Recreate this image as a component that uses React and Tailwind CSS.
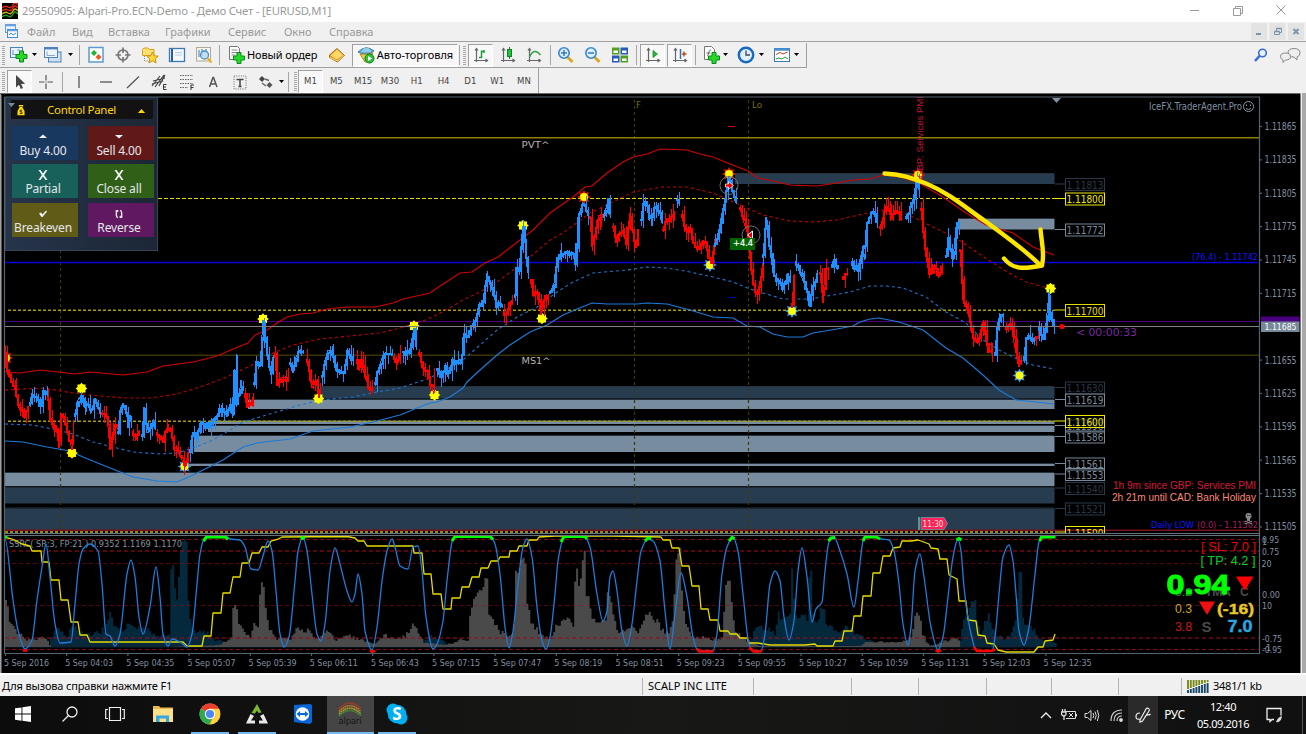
import React from "react";

/* ---------- price data: colour + way points of every trend leg ---------- */
const LEGS = [
  ["r", "5,357 8,375 13,383 17,397 20,410 25,415 29,408"],
  ["b", "30,405 32,393 36,398 41,405 43,393 47,393"],
  ["r", "48,397 50,420 53,427 57,433 59,448 61,413 64,417 67,430 70,442 72,450 74,420"],
  ["b", "75,416 77,402 81,395 84,407 87,403 91,413 95,398 100,410"],
  ["r", "102,413 107,415 110,450 113,432 117,425"],
  ["b", "118,432 120,410 123,403 127,417 128,428 130,415 132,427"],
  ["r", "133,432 136,440 140,430"],
  ["b", "142,435 144,407 147,433 149,432 153,420 156,430"],
  ["r", "157,433 162,440 166,430 172,432 174,450 178,452 182,460 185,467 188,453"],
  ["b", "190,450 193,432 197,437 200,423 207,425 212,421 217,415 222,408 227,417 230,408 233,417 234,370 236,405 237,354 238,405 241,380 243,393"],
  ["r", "245,397 247,408 251,403 253,397"],
  ["b", "254,383 256,364 260,367 263,320 266,340 268,360 271,375 273,360"],
  ["r", "275,357 277,385 282,377 288,378"],
  ["b", "290,363 293,373 296,357 299,350 304,352"],
  ["r", "307,360 310,377 312,388 316,380 319,398 321,383"],
  ["b", "322,377 325,360 328,350 332,353 335,368 340,370 344,372 347,353 353,360"],
  ["r", "357,363 358,370 361,362 365,377 369,387 373,388"],
  ["b", "375,383 378,370 383,355 393,354"],
  ["r", "394,357 397,365 400,355"],
  ["b", "403,352 409,353 414,328 417,350"],
  ["r", "419,353 423,367 428,373 431,385 434,394 435,368"],
  ["b", "437,370 440,377 445,368 448,373 452,362 457,362 462,358 463,337 468,335 472,325 474,328 479,307 483,300 487,273 490,283 493,293 497,307 502,303"],
  ["r", "504,312 507,315 509,302 513,305"],
  ["b", "515,297 516,267 519,270 522.5,228 525,243 527,260 529,278"],
  ["r", "531,283 533,293 537,295 541,315 545,298 548,300"],
  ["b", "550,293 554,283 557,257 562,257 565,252 568,255 572,252 575,262 577,243 578,217 584,203 588,213"],
  ["r", "590,217 592,247 596,230 599,215 603,220"],
  ["b", "604,217 608,200 611,218"],
  ["r", "613,227 616,243 622,230 627,245 630,213 633,233 636,248 638,230"],
  ["b", "641,220 643,203 647,205 649,220 653,213 657,205 662,220"],
  ["r", "663,230 667,220 671,218 675,213"],
  ["b", "677,200 680,205"],
  ["r", "682,217 685,230 690,227 693,243 698,248 703,240 707,250 711,263 714,245"],
  ["b", "715,246 718,235 722,213 725,200 729,177 733,193 737,203"],
  ["r", "740,208 743,220 748,235 751,270 753,280 756,295 760,283 763,263"],
  ["b", "763,257 766,217 768,238 770,250 773,273 778,280 783,290 788,273 791,283"],
  ["r", "792,307 794,277"],
  ["b", "796,262 800,273 804,283 807,293 810,307 812,290 817,277"],
  ["r", "820,273 823,303 825,268 828,270"],
  ["b", "832,265 835,260 838,270"],
  ["r", "843,277 848,272"],
  ["b", "852,265 858,268 863,247 865,260 866,230 869,217 873,213 878,223"],
  ["r", "880,227 886,208 891,215 898,213 902,220"],
  ["b", "906,217 909,212 913,200 916,182 919,187"],
  ["r", "921,210 923,230 926,257 929,273 936,267 939,277 943,263"],
  ["b", "946,257 948,240 953,260 956,227 959,223"],
  ["r", "960,250 963,300 966,307 969,317 974,343 979,337 983,323 988,353 993,350"],
  ["b", "995,353 997,327 999,318 1004,315"],
  ["r", "1006,327 1011,323 1014,343 1019,367 1022,357"],
  ["b", "1024,357 1026,337 1029,337 1034,340"],
  ["r", "1036,340 1038,338"],
  ["b", "1039,330 1043,337 1046,323 1049,293 1051,320 1054,325"],
];

const UPPER =
  "5,372 20,373 40,370 58,372 75,374 90,372 123,375 147,372 163,366 193,362 217,356 233,349 248,343 255,335 267,330 277,323 287,317 300,314 313,313 327,309 347,307 375,307 393,303 403,299 430,293 440,286 460,273 472,272 485,263 498,257 520,240 533,230 550,213 573,197 585,187 592,186 607,173 623,162 633,157 647,154 660,149 687,150 700,154 713,157 730,164 748,171 758,178 773,181 790,185 817,186 837,183 853,180 870,179 883,175 900,177 919,183 943,197 966,213 986,225 1013,233 1033,247 1054,255";
const UPPER_MID =
  "5,390 43,388 73,393 100,396 127,398 150,398 177,394 203,386 227,377 250,366 273,353 293,345 320,339 350,336 380,333 400,328 423,321 443,312 463,300 480,292 497,282 513,270 530,257 550,240 563,233 590,213 617,200 633,192 663,187 687,187 713,193 747,208 763,215 790,221 813,222 837,220 863,214 880,210 903,212 933,227 956,238 969,247 993,263 1009,273 1026,282 1048,288";
const LOWER_MID =
  "5,424 33,425 57,430 73,434 93,442 113,447 133,452 160,454 177,453 193,448 213,440 230,430 243,422 273,413 300,405 320,400 353,397 377,392 400,388 427,379 440,373 463,360 480,345 497,330 517,317 537,307 557,292 573,282 593,273 627,270 647,267 667,268 690,272 713,277 733,282 750,289 763,293 783,299 810,299 833,295 850,292 870,286 886,286 903,288 926,297 946,312 966,323 983,340 999,350 1019,360 1033,365 1054,369";
const LOWER =
  "5,441 23,442 47,447 70,451 83,457 110,468 133,477 157,481 177,482 193,475 203,470 223,460 243,447 257,443 290,439 313,431 350,427 373,422 400,415 417,408 430,403 437,402 450,397 463,388 467,382 480,370 497,355 510,345 530,332 547,325 563,315 577,309 592,303 607,304 637,304 647,303 667,304 690,310 713,317 733,318 747,326 760,327 773,334 787,337 803,337 813,333 837,329 853,326 860,322 870,319 879,318 899,322 923,330 946,348 963,358 983,375 999,390 1016,400 1036,402 1054,404";

const OSC =
  "5,539 13,600 18,630 25,649 32,640 37,600 42,567 46,544 50,577 55,624 60,643 71,642 75,604 79,564 83,549 90,544 98,551 102,584 106,634 110,636 115,646 120,634 127,574 131,560 135,577 139,617 143,634 150,607 156,567 160,597 163,634 168,646 172,639 180,642 187,647 192,634 197,584 200,554 204,539 206,537 227,537 230,539 240,540 245,547 251,569 258,570 263,556 268,541 272,551 276,591 280,634 284,647 289,637 295,581 298,551 303,537 307,551 312,594 317,634 321,641 325,624 330,571 335,548 340,564 347,591 352,602 355,594 358,574 362,594 365,631 372,650 377,627 382,581 387,551 392,539 395,547 400,566 408,569 413,547 418,546 422,571 426,617 433,649 437,644 443,621 447,581 452,542 454,537 491,537 495,544 500,574 505,627 509,648 513,631 518,584 523,547 527,539 532,557 537,607 542,641 546,649 550,637 555,594 558,561 563,539 565,537 585,537 590,547 597,594 603,621 607,611 610,577 613,571 617,591 622,631 627,646 632,624 637,581 641,551 648,539 653,541 660,561 665,611 670,649 675,614 681,573 687,597 693,637 698,651 713,651 717,634 722,574 727,547 733,537 738,551 743,594 749,644 753,651 761,651 765,634 770,584 775,571 780,581 784,617 789,640 794,621 798,571 802,548 807,577 812,622 816,609 822,602 825,571 829,542 834,537 840,551 847,574 854,607 858,581 863,541 865,537 876,537 881,539 889,540 894,551 899,584 903,624 908,645 911,627 915,571 920,554 924,577 931,627 938,650 943,637 948,597 953,557 958,539 961,551 964,587 969,624 975,648 978,651 992,651 995,637 999,594 1003,557 1009,545 1013,561 1016,594 1019,631 1024,645 1029,627 1035,574 1039,542 1042,537 1055,537";

const STEPS =
  "5,537 12,539 22,544 30,546 32,551 41,551 42,562 49,562 51,580 59,580 61,600 68,600 71,622 78,622 80,635 87,635 90,642 183,642 187,646 202,646 204,636 211,636 213,613 221,613 223,593 230,593 233,577 240,577 242,563 249,563 252,553 259,553 262,547 268,547 271,541 278,539 282,537 347,536.5 355,538 358,541 364,541 367,546 413,546 414,553 422,553 424,574 431,574 433,594 441,594 443,609 451,609 452,598 460,598 462,587 469,587 472,577 479,577 481,568 488,568 491,561 498,561 500,557 509,557 510,551 517,551 519,546 527,546 529,540 537,540 539,537 555,536 613,536 661,537 663,540 670,540 672,548 679,548 682,566 689,566 692,586 699,586 701,609 708,609 710,620 718,620 720,631 728,631 730,634 737,634 740,638 747,638 749,643 758,643 770,645 805,645 815,644 817,646 833,646 835,641 842,641 844,631 852,631 854,616 861,616 863,596 871,596 873,573 880,573 883,556 890,556 893,548 900,547 902,541 911,541 918,540 921,541 929,544 931,548 938,549 940,559 947,559 949,575 957,579 959,601 966,601 968,620 976,621 978,635 985,636 987,643 994,644 998,650 1006,652 1034,652 1038,647 1043,647 1045,641 1053,640 1055,634";

const VOL_TEAL =
  "50,640 55,628 60,630 65,638 75,625 85,635 95,634 105,628 109,612 111,612 113,627 120,630 130,625 134,628 140,625 150,632 160,636 170,634 171,565 174,565 175,600 178,600 179,555 181,545 183,545 184,541 187,541 188,600 191,625 195,634 205,632 215,640 230,643 240,645 420,645 430,636 440,640 450,645 740,645 750,640 755,630 760,627 765,632 770,630 775,634 778,614 784,622 790,612 791,570 793,570 794,620 798,615 804,617 808,618 809,572 811,572 813,624 818,625 820,607 824,607 826,625 832,630 838,634 845,628 850,630 858,634 866,640 890,645 950,645 960,640 963,617 967,620 971,602 975,602 976,620 982,636 985,620 989,615 992,630 997,636 1005,639 1010,635 1015,620 1018,585 1019,571 1021,571 1022,615 1026,628 1035,630 1040,640 1055,642";
const VOL_GRAY =
  "5,595 7,605 9,622 12,628 18,632 25,640 40,638 48,640 50,647 170,647 220,645 225,641 232,638 233,607 237,607 238,625 243,632 250,637 254,622 258,630 260,585 263,585 265,605 268,625 275,638 290,640 297,628 302,628 308,632 315,638 328,631 335,641 345,635 360,640 375,644 385,635 395,640 405,636 412,625 415,625 418,634 424,643 445,645 460,640 469,640 470,606 472,606 473,602 480,590 485,580 487,580 488,612 493,622 500,632 505,633 510,636 514,625 515,572 518,572 520,565 522,560 526,560 527,600 531,622 540,635 550,640 556,622 560,625 568,617 574,625 575,565 577,565 578,598 580,555 581,598 583,548 585,548 586,598 589,600 591,618 600,625 606,620 607,595 609,595 613,615 618,630 625,634 632,624 638,634 645,615 650,615 657,622 665,635 672,625 676,560 677,550 680,550 682,600 685,625 693,638 700,637 715,640 722,637 725,590 729,577 731,600 734,630 745,640 760,646 860,646 866,642 900,642 912,638 914,614 920,614 922,632 926,642 930,646 945,641 958,638 960,647";

const parse = (s) => s.split(" ").map((p) => p.split(",").map(Number));
const rnd = (n) => {
  const v = Math.sin(n * 127.1 + 11.7) * 43758.5453;
  return v - Math.floor(v);
};
const at = (pts, x) => {
  for (let i = 1; i < pts.length; i++)
    if (x <= pts[i][0]) {
      const [x0, y0] = pts[i - 1];
      const [x1, y1] = pts[i];
      return x1 === x0 ? y1 : y0 + ((y1 - y0) * (x - x0)) / (x1 - x0);
    }
  return pts[pts.length - 1][1];
};

/* monotone cubic through the points, so peaks are round but never overshoot */
function smooth(s) {
  const p = parse(s);
  const slope = (i) => (p[i + 1][1] - p[i][1]) / (p[i + 1][0] - p[i][0]);
  const m = p.map((_, i) => {
    if (i === 0 || i === p.length - 1) return 0;
    const a = slope(i - 1);
    const b = slope(i);
    return a * b <= 0 ? 0 : (2 * a * b) / (a + b);
  });
  let d = `M${p[0]}`;
  for (let i = 1; i < p.length; i++) {
    const h = (p[i][0] - p[i - 1][0]) / 3;
    d += `C${p[i - 1][0] + h} ${p[i - 1][1] + m[i - 1] * h} ${p[i][0] - h} ${p[i][1] - m[i] * h} ${p[i][0]} ${p[i][1]}`;
  }
  return d;
}

/* thick bodies plus thin wicks for each leg */
function Leg({ color, pts }) {
  const p = parse(pts);
  const stroke = color === "r" ? "#ff0000" : "#1e90ff";
  const x0 = p[0][0];
  const x1 = p[p.length - 1][0];
  let body = "";
  let wicks = "";
  let prev = p[0][1];
  for (let x = x0; x <= x1 + 0.5; x += 1.91) {
    const y = at(p, Math.min(x, x1));
    const jit = (rnd(x) - 0.5) * 7;
    const a = Math.min(prev, y + jit) - 1;
    const b = Math.max(prev, y + jit) + 1;
    const px = Math.round(x);
    body += `M${px} ${a.toFixed(1)}V${b.toFixed(1)}`;
    wicks += `M${px + 0.5} ${(a - rnd(x + 3) ** 2 * 10).toFixed(1)}V${(b + rnd(x + 9) ** 2 * 10).toFixed(1)}`;
    prev = y + jit;
  }
  return (
    <g fill="none" stroke={stroke} shapeRendering="crispEdges">
      <path d={body} strokeWidth="2" />
      <path d={wicks} strokeWidth="1" />
      <polyline points={pts} strokeWidth="1" />
    </g>
  );
}

function bars(s, seed) {
  const p = parse(s);
  const end = p[p.length - 1][0];
  let d = "";
  for (let x = p[0][0]; x < end; x += 1.91) {
    let y = at(p, x + 0.6);
    if (y > 647) continue;
    y += (rnd(x + seed) - 0.5) * Math.min(7, (647 - y) * 0.4);
    d += `M${x.toFixed(1)} 647V${y.toFixed(1)}h2V647z`;
  }
  return d;
}

const STARS = [
  [6, 358, "#ff2000"], [81.5, 388.5, "#ffff00"], [72, 453, "#ffe000"], [184.5, 466.5, "#2f8ff0"],
  [263, 319, "#ffff00"], [414, 326, "#ffff00"], [318.5, 398.5, "#ffff00"], [434.5, 395, "#ffff00"],
  [523, 225.5, "#ffff00"], [584, 197, "#ff1000"], [542, 318.5, "#ffff00"], [710, 265, "#3f9ff0"],
  [729, 174, "#ff1000"], [792, 311, "#3f9ff0"], [918, 175, "#ff1000"], [1050.5, 288.5, "#ffff00"],
  [1019.5, 375.5, "#3f9ff0"],
];
function Star({ x, y, c }) {
  const n = 16;
  const halo = c !== "#ffff00" && c !== "#ffe000";
  const pts = Array.from({ length: n }, (_, i) => {
    const r = i % 2 ? 4.2 : halo ? 7 : 5.8;
    const t = (i / n) * Math.PI * 2;
    return `${(x + r * Math.cos(t)).toFixed(1)},${(y + r * Math.sin(t)).toFixed(1)}`;
  }).join(" ");
  return (
    <g>
      <polygon points={pts} fill={c} />
      <circle cx={x} cy={y} r="3.9" fill="#ffff00" />
    </g>
  );
}

const TAHOMA = '"DejaVu Sans Condensed","DejaVu Sans",sans-serif';
const ARIAL = '"Liberation Sans",Arial,sans-serif';

function T({ x, y, w, s = 10, c = "#8090a0", f = TAHOMA, b, a, children, ...rest }) {
  return (
    <text x={x} y={y} fontSize={s} fill={c} fontFamily={f} fontWeight={b ? 700 : 400}
      textAnchor={a} textLength={w} lengthAdjust="spacingAndGlyphs" {...rest}>
      {children}
    </text>
  );
}

function PriceTag({ y, c, children }) {
  return (
    <g>
      <path d={`M1055 ${y}h10`} stroke={c} />
      <rect x="1065.5" y={y - 5.5} width="39" height="12" fill="none" stroke={c} />
      <T x={1066.5} y={y + 4.5} w={37} s={11} c={c}>{children}</T>
    </g>
  );
}

const ZONES = [
  [735, 174, 184, 0], [958, 219, 229.5, 1], [320, 387, 398.5, 0], [248, 400, 409, 1], [212, 421, 424, 1],
  [208, 426, 432, 1], [194, 436, 452, 1], [188, 464, 466, 1], [5, 473, 486, 1], [5, 487.5, 503.5, 0], [5, 508.5, 530, 0],
];
const AXIS = ["1.11865", "1.11835", "1.11805", "1.11775", "1.11745", "1.11715", null, "1.11655", "1.11625", "1.11595", "1.11565", "1.11535", "1.11505"];
const TIMES = ["5 Sep 2016", "5 Sep 04:03", "5 Sep 04:35", "5 Sep 05:07", "5 Sep 05:39", "5 Sep 06:11", "5 Sep 06:43", "5 Sep 07:15", "5 Sep 07:47", "5 Sep 08:19", "5 Sep 08:51", "5 Sep 09:23", "5 Sep 09:55", "5 Sep 10:27", "5 Sep 10:59", "5 Sep 11:31", "5 Sep 12:03", "5 Sep 12:35"];

function Chart() {
  return (
    <svg className="block h-[580px] w-[1306px]" viewBox="0 93 1306 580">
      <rect y="93" width="1306" height="580" fill="#000" />
      <path d="M.5 93v580" stroke="#a0a0a0" />
      <path d="M0 93.5h1302" stroke="#696969" />
      <path d="M1.5 95v578M1301.5 94v578" stroke="#555" />
      <rect x="1300.5" y="93" width="6" height="580" fill="#f0f0f0" />
      <rect x="1302" y="93" width="4" height="580" fill="#a9a9a9" />

      <defs><clipPath id="main"><rect x="5" y="97" width="1254" height="437" /></clipPath></defs>
      <g clipPath="url(#main)">
        {ZONES.map(([x, a, b, l]) => (
          <g key={`${x}-${a}`}>
            <rect x={x} y={a} width={1054.5 - x} height={b - a} fill={l ? "#778c9f" : "#283c50"} />
            <path d={`M${x} ${a - 0.5}H1054`} stroke="#26333f" />
          </g>
        ))}
        <g strokeDasharray="3 3" stroke="#3a3a0a">
          <path d="M60.5 250V534M634.5 100V534M748.5 100V534" strokeWidth="1.2" />
        </g>
        <path d="M5 137.7H1259" stroke="#8e7f00" strokeWidth="1.6" />
        <path d="M158 198.5H1055" stroke="#e6d800" strokeDasharray="4 2" />
        <path d="M8 310.2H1055M8 421.2H1055" stroke="#a89e00" strokeWidth="1.5" strokeDasharray="3 2" />
        <path d="M5 262.6H1258" stroke="#0000d8" strokeWidth="1.5" />
        <path d="M5 321.5H1259" stroke="#4b0082" />
        <path d="M5 355.2H1259" stroke="#3a3400" strokeWidth="1.6" />
        <path d="M5 530.3H1259" stroke="#7a1018" strokeWidth="1.4" />
        <path d="M5 532H1055" stroke="#c8b800" strokeWidth="1.5" strokeDasharray="3 2" />

        <g fill="none" strokeWidth="1.1">
          <polyline points={UPPER} stroke="#d40000" />
          <polyline points={UPPER_MID} stroke="#c00000" strokeDasharray="3 3" />
          <polyline points={LOWER_MID} stroke="#1c74cc" strokeDasharray="3 3" />
          <polyline points={LOWER} stroke="#1c7ad8" strokeWidth="1.2" />
        </g>
        {STARS.map(([x, y, c]) => <Star key={x} x={x} y={y} c={c} />)}
        {LEGS.map(([c, p], i) => <Leg key={i} color={c} pts={p} />)}
        <path d="M5 326.5H1259" stroke="#808080" />
        <path d="M728 126.5h7" stroke="#e00000" />
        <path d="M728 297.5h7" stroke="#0000c0" />
        <g fill="none" stroke="#66727c">
          <circle cx="729" cy="185.5" r="9" />
          <circle cx="751" cy="235" r="9" />
        </g>
        <path d="M725.5 184h3v-2.500l5 4-5 4V187h-3z" fill="#e00000" stroke="#fff" strokeWidth=".7" />
        <path d="M752.500 231v8l-5-4z" fill="#e00000" stroke="#fff" strokeWidth="1" />
        <rect x="730" y="238" width="25" height="12" fill="#006400" />
        <T x={733} y={246} w={20} s={9} c="#fff" f='"DejaVu Sans",sans-serif' strokeWidth=".2" stroke="#fff">+4.4</T>
        <T x={636} y={108} s={9.500} c="#7a6e00">F</T>
        <T x={752} y={108} w={10} s={9.500} c="#7a6e00">Lo</T>
        <T x={521.500} y={147.500} w={28} s={9.500} c="#b4b4b4" f='"DejaVu Sans",sans-serif'>PVT^</T>
        <T x={521.500} y={364} w={29} s={9.500} c="#b4b4b4" f='"DejaVu Sans",sans-serif'>MS1^</T>
        <T x={923} y={178} w={82} s={9.500} c="#c0143c" f={ARIAL} transform="rotate(-90 923 178)">GBP: Services PMI</T>
        <path d="M1052 98h9l-4.500 5z" fill="#8090a0" />
        <circle cx="1062" cy="326.500" r="2.600" fill="#f00" />
        <T x={1076} y={336} w={61} s={10.500} c="#7a2aa0" f='"DejaVu Sans",sans-serif'>{"< 00:00:33"}</T>
        <path d="M919 517v13" stroke="#4f9a9a" strokeWidth="2" />
        <path d="M921 517.500h23l3.500 6-3.500 6h-23z" fill="#ff2060" stroke="#66b0a8" strokeWidth=".7" />
        <T x={922.500} y={527} w={21} s={9} c="#f0e8c0">11:30</T>

        <PriceTag y={184} c="#283848">1.11813</PriceTag>
        <PriceTag y={229.500} c="#778899">1.11772</PriceTag>
        <PriceTag y={387.500} c="#283848">1.11630</PriceTag>
        <PriceTag y={399.500} c="#778899">1.11619</PriceTag>
        <PriceTag y={425.500} c="#778899">1.11596</PriceTag>
        <PriceTag y={436.500} c="#778899">1.11586</PriceTag>
        <PriceTag y={463.500} c="#778899">1.11561</PriceTag>
        <PriceTag y={474} c="#778899">1.11553</PriceTag>
        <PriceTag y={488} c="#283848">1.11540</PriceTag>
        <PriceTag y={508.500} c="#283848">1.11521</PriceTag>
        <rect x="1066" y="415" width="38" height="12" fill="#000" fillOpacity=".6" />
        <PriceTag y={198.500} c="#f0ea00">1.11800</PriceTag>
        <PriceTag y={310} c="#e0dc00">1.11700</PriceTag>
        <PriceTag y={421} c="#f0ea00">1.11600</PriceTag>
        <PriceTag y={532} c="#f0ea00">1.11500</PriceTag>

        <T x={1149} y={109.500} w={93} s={10}>IceFX.TraderAgent.Pro</T>
        <g fill="none" stroke="#8a97a4">
          <circle cx="1248.500" cy="106.500" r="5" />
          <path d="M1246 108.500q2.500 2 5 0M1246.500 104.500v1.500M1250.500 104.500v1.500" />
        </g>
        <T x={1192} y={260} w={66} s={9.500} c="#1414ff">(76.4) -  1.11742</T>
        <T x={1113} y={489} w={143} s={10.500} c="#d8183c" f={ARIAL}>1h 9m since GBP: Services PMI</T>
        <T x={1112} y={501} w={144} s={10.500} c="#fa8878" f={ARIAL}>2h 21m until CAD: Bank Holiday</T>
        <T x={1151} y={527.500} w={43} s={9.500} c="#1414ff">Daily LOW</T>
        <T x={1197} y={527.500} w={61} s={9.500} c="#a81c60">(0.0) -  1.11502</T>
        <g fill="#8a8a8a"><circle cx="1248.500" cy="516" r="3" /><rect x="1247" y="518" width="3" height="3" /><path d="M1245 521l7 3M1252 521l-7 3" stroke="#8a8a8a" /></g>
        <path d="M1247.300 515.500h1M1249.300 515.500h1" stroke="#000" />

        <g fill="none" stroke="#ffe600" strokeWidth="4.400" strokeLinecap="round" strokeLinejoin="round">
          <path d="M884.500 173.500C901 174 912 178 926 183.500C949 193 966 208 985 221C1004 235 1024 249 1040 265" />
          <path d="M1040.500 229.500C1041.500 243 1045 253 1042 265" />
          <path d="M1004 258.500C1013 270 1024 269 1042 265.500" />
        </g>
      </g>

      {/* oscillator pane */}
      <g fill="#04283c"><path d={bars(VOL_TEAL, 4)} /><rect x="5" y="645" width="1045" height="2.500" fill="#0b2536" /></g>
      <path d={bars(VOL_GRAY, 8)} fill="#4a4a4a" />
      <g stroke="#9c0c18" strokeDasharray="4 3">
        <path d="M5 539.500H1259" opacity=".9" />
        <path d="M5 551H1259" strokeWidth="1.700" opacity=".75" />
        <path d="M5 563.500H1259M5 605.500H1259" opacity=".55" />
        <path d="M5 638H1259" strokeWidth="1.700" opacity=".75" />
        <path d="M5 649.500H1259" opacity=".9" />
      </g>
      <T x={9} y={547} w={173} s={9.500}>SSRC( SR:3, FP:21 ) 0.9352 1.1169 1.1170</T>
      <g fill="none" strokeWidth="1.300" strokeLinejoin="round">
        <polyline points={STEPS} stroke="#e6dc00" />
        <path d={smooth(OSC)} stroke="#1e7cdc" />
      </g>
      <g fill="none" stroke="#00ff00" strokeWidth="3">
        <path d="M4.500 537h3M203.500 541l3-4h19l2.500 2.500M301 539l2-2 1.500 2M452 541l3-4.500h35l3 3M561 542l3-5.500h21l2 2.500M645 541l3-3 3 .5M729 541l3-3.500 2.500 1M828.500 541l2.500-3 4-.5M863 541l2-4h11l4 2M956.500 540l2.500-1.500 2.500 1.500M1039.500 541l2-4h14" />
      </g>
      <path d="M23 650.500h4M370 650.500l2.500 1.500 2.500-1.500M697 648.500l2.500 3h14M749.500 647.500l4 4h7l1-1.500M935.500 650l2.500 1.500 3-1.500M974 647l3 4h14l4-1.500" fill="none" stroke="#f00" strokeWidth="2.600" />

      {/* frame, axes and their labels */}
      <g stroke="#56636f" strokeWidth="1.200" fill="none">
        <path d="M4.500 97V653.500M4.500 97H1259.500V653.500H4.500" />
        <path d="M4 533.500H1260M4 535.500H1260" stroke="#66727e" strokeWidth="1" />
        {TIMES.map((t, i) => <path key={t} d={`M${5.500 + i * 61.200} 653v3`} />)}
        {AXIS.map((t, i) => t && <path key={t} d={`M1259 ${126.500 + i * 33.370}h3`} />)}
      </g>
      {AXIS.map((t, i) => t && <T key={t} x={1264.500} y={130 + i * 33.370} w={32} s={9.800}>{t}</T>)}
      {TIMES.map((t, i) => <T key={t} x={4 + i * 61.150} y={665.500} w={i ? 48 : 45} s={9.500}>{t}</T>)}
      <rect x="1261" y="316.500" width="38.500" height="6" fill="#4b0082" />
      <rect x="1261" y="321.500" width="38.500" height="10.500" fill="#778899" />
      <T x={1264.500} y={330} w={32} s={9.500} c="#fff">1.11685</T>
      <T x={1262} y={543} w={17} s={9.500}>0.95</T>
      <T x={1262} y={545} s={9}>1</T>
      <T x={1262} y={554.500} w={17} s={9.500}>0.75</T>
      <T x={1261.500} y={567} w={10} s={9.500}>20</T>
      <T x={1262} y={597.500} w={18} s={9.500}>0.00</T>
      <T x={1262} y={609} w={10} s={9.500}>10</T>
      <T x={1262} y={641.500} w={20} s={9.500}>-0.75</T>
      <T x={1262} y={653} w={20} s={9.500}>-0.95</T>
      <T x={1263} y={651} s={9}>-1</T>

      <T x={1201} y={550.500} w={55} s={12} c="#f00000" f={ARIAL}>[ SL: 7.0 ]</T>
      <T x={1200.500} y={565} w={55} s={12} c="#00d020" f={ARIAL}>[ TP: 4.2 ]</T>
      <T x={1175} y={596} w={17} s={11} c="#10a020" f={ARIAL}>0.2</T>
      <T x={1205} y={596} w={26} s={11} c="#4a4a4a" f={ARIAL} b>TMA</T>
      <T x={1240} y={596} s={12} c="#4a4a4a" f={ARIAL} b>C</T>
      <T x={1166.500} y={594} w={63} s={28} c="#00ff00" f={ARIAL} b stroke="#00ff00" strokeWidth=".9">0.94</T>
      <path d="M1236 576.500h17.500l-8.700 14z" fill="#f00" />
      <T x={1175} y={613} w={17} s={12} c="#c8a818" f={ARIAL}>0.3</T>
      <path d="M1199 601.500h16l-8 13.500z" fill="#f01010" />
      <T x={1217} y={613.500} w={37} s={14.500} c="#e8c828" f={ARIAL} b stroke="#e8c828" strokeWidth=".4">(-16)</T>
      <T x={1175} y={631} w={17} s={12} c="#d01018" f={ARIAL}>3.8</T>
      <T x={1201.500} y={632} s={15} c="#4a4a4a" f={ARIAL} b>S</T>
      <T x={1227.500} y={631.500} w={25} s={16} c="#28a8e0" f={ARIAL} b stroke="#28a8e0" strokeWidth=".4">7.0</T>
    </svg>
  );
}

/* ---------- control panel ---------- */
const PANEL_GLYPHS = {
  up: <path d="M2 7l4-3.500L10 7z" />,
  down: <path d="M2 4h8L6 7.500z" />,
  x: <path d="M1.500 1h2L6 4.600 8.500 1h2L7.100 6l3.400 5h-2L6 7.400 3.500 11h-2L4.900 6z" />,
  check: <path d="M2 5.500l2-1 1.500 2L9 2.500l1 1L5.500 9H4.500z" />,
  rev: <path d="M4.500 2Q2 6 4.500 10M7.500 2Q10 6 7.500 10M2.500 3h3M9.500 9H6.500" fill="none" stroke="#eee" strokeWidth="1.400" />,
};
function PanelButton({ bg, glyph, children }) {
  return (
    <div className={`flex h-[34px] w-[66px] flex-col items-center justify-between ${bg} pt-[5px] pr-[4px] pb-[2px] leading-none text-gray-200`}>
      <svg className="h-3 w-3 fill-gray-100" viewBox="0 0 12 12">{PANEL_GLYPHS[glyph]}</svg>
      <span className="whitespace-nowrap font-['Noto_Sans',sans-serif] text-[12px] leading-[14px] tracking-[-0.150px]">{children}</span>
    </div>
  );
}
function ControlPanel() {
  return (
    <div className="absolute left-[5px] top-[4px] h-[154px] w-[153px] border border-[#34465a] bg-gradient-to-r from-[#26344a] to-[#1c2636] px-[5px] pt-[2px]">
      <div className="flex h-[19px] w-[142px] items-center bg-[#121212] pl-[6px] text-[#ffd800]">
        <svg className="h-[12px] w-[8px]" viewBox="0 0 9 13">
          <path d="M2 1h5v1.500H2zM3 3h3l2.500 5v4.500H.5V8z" fill="#ffd800" />
          <path d="M5.800 6.800H3.600v1.800h2v1.900H3.200" fill="none" stroke="#222" />
        </svg>
        <span className="ml-[22px] whitespace-nowrap font-['Noto_Sans',sans-serif] text-[11.500px] leading-none tracking-[-0.300px]">Control Panel</span>
        <svg className="ml-auto mr-[7px] mt-[3px] h-[4px] w-[9px]" viewBox="0 0 9 5"><path d="M0 5l4.500-5L9 5z" fill="#ffd800" /></svg>
      </div>
      <div className="mt-[7px] ml-[1px] grid w-[142px] grid-cols-2 gap-x-[10px] gap-y-[4.300px]">
        <PanelButton bg="bg-[#183860]" glyph="up">Buy 4.00</PanelButton>
        <PanelButton bg="bg-[#601818]" glyph="down">Sell 4.00</PanelButton>
        <PanelButton bg="bg-[#18605a]" glyph="x">Partial</PanelButton>
        <PanelButton bg="bg-[#306018]" glyph="x">Close all</PanelButton>
        <PanelButton bg="bg-[#605c18]" glyph="check">Breakeven</PanelButton>
        <PanelButton bg="bg-[#601860]" glyph="rev">Reverse</PanelButton>
      </div>
    </div>
  );
}

/* ---------- toolbar icons (18 x 18) ---------- */
const plus = (x, y) => <path d="M3.500 0h4v3.500H11v4H7.500V11h-4V7.500H0v-4h3.500z" transform={`translate(${x} ${y})`} fill="#28d828" stroke="#0a8a1a" />;
const AXES = <path d="M4.500 3v13M2 14.500h13M3 4.500L4.500 2.500 6 4.500M13.500 13l2 1.500-2 1.500" fill="none" stroke="#666" strokeWidth="1.200" />;
const ICON = {
  newChart: <><rect x=".5" y="1.500" width="12" height="10" fill="#e8f2ff" stroke="#4c82b8" /><path d="M3 4v5M3 8.500h5M7 4h3" stroke="#6a9ac8" fill="none" />{plus(6, 5)}</>,
  profiles: <><rect x="4.500" y="6" width="12.500" height="10" fill="#cfe0f2" stroke="#4c82b8" /><rect x=".5" y="1.500" width="13" height="10" fill="#eef5ff" stroke="#4c82b8" /><path d="M.5 2.500h13" stroke="#4c82b8" strokeWidth="1.800" /><path d="M3 5.500v4h8" fill="none" stroke="#88a8c8" /></>,
  market: <><rect x="2" y="1.500" width="14" height="14.500" fill="#fff" stroke="#5a9ad0" strokeWidth="1.500" /><path d="M7 4l3 3-3 3-3-3z" fill="#20b030" /><path d="M11.500 8l3 3-3 3-3-3z" fill="#f05828" /></>,
  target: <g fill="none" stroke="#777" strokeWidth="1.700"><circle cx="9" cy="9" r="5" /><path d="M9 1.500v5.500M9 11v5.500M1.500 9H7M11 9h5.500" /></g>,
  nav: <><path d="M1.500 3.500L3 2h4l1.500 1.500H13v6H1.500z" fill="#ffe070" stroke="#d8a018" /><path d="M3.500 10v5h5" stroke="#888" strokeDasharray="1 1" fill="none" /><path d="M11.500 6l1.700 3.800 4 .4-3 2.700.9 4-3.600-2.100L7.900 17l.9-4-3-2.800 4-.4z" fill="#ffd83a" stroke="#c89010" /></>,
  terminal: <><rect x="1.500" y="2.500" width="15" height="13" fill="#f4f9ff" stroke="#3a78b8" strokeWidth="1.300" /><path d="M4 3v12" stroke="#2c5aa0" strokeWidth="2" /><path d="M7 6.500h7M7 9h7" stroke="#b8cce0" /></>,
  tester: <><rect x="1.500" y="1.500" width="14" height="13.500" fill="#f8f4ec" stroke="#b0a898" /><path d="M4 4v7M7 3v7M11 3v4" stroke="#5a9ad0" strokeWidth="1.300" /><circle cx="9.500" cy="9" r="4" fill="#b8d8f4" fillOpacity=".8" stroke="#4a90c8" strokeWidth="1.300" /><path d="M12.500 12l4 4.500" stroke="#e8b020" strokeWidth="2.200" /></>,
  order: <><path d="M2.500 .5h8l2 2v11h-10z" fill="#fff" stroke="#777" /><path d="M4.500 4h6M4.500 6.500h6M4.500 9h4" stroke="#888" />{plus(6.500, 6.500)}</>,
  gold: <><path d="M1.500 9L9 2.500l7.500 7-7 6.500-8-4.500z" fill="#d89820" stroke="#a87010" /><path d="M2.500 9.500L9 3.500l6 5.500-6 4.500z" fill="#ffd868" /><path d="M2 11.500l7.500 3.500 6.500-5.500" fill="none" stroke="#fff0b0" strokeWidth=".8" /></>,
  auto: <><path d="M1 6q8-8 16-1-3 3-8 3T1 6z" fill="#6ab0d8" stroke="#3878a8" /><path d="M5 4q3-4 8-1l1 3H5z" fill="#90cce8" /><path d="M3 8l5 8h3l5-9q-6 2-13 1z" fill="#e8c850" stroke="#b08820" /><circle cx="12.500" cy="12.500" r="4.500" fill="#30c040" stroke="#0a8018" /><path d="M11 10v5l4-2.500z" fill="#fff" /></>,
  barsUp: <>{AXES}<path d="M9.500 4.500V12M9.500 5.500h3M7 11.500h2.500M12 4v3" stroke="#18a030" strokeWidth="1.500" fill="none" /></>,
  candle: <>{AXES}<path d="M10.500 1v12" stroke="#108020" /><rect x="8.500" y="3.500" width="4" height="7" fill="#20c040" stroke="#108020" /></>,
  line: <>{AXES}<path d="M4.500 11Q9 1 15.500 9" stroke="#30a040" strokeWidth="1.400" fill="none" /></>,
  zin: <><path d="M10.500 11l5 5" stroke="#d8a820" strokeWidth="3" /><circle cx="7" cy="7" r="5.200" fill="#dceeff" stroke="#3a88d0" strokeWidth="1.600" /><path d="M4 7h6M7 4v6" stroke="#3a78c0" strokeWidth="1.500" /></>,
  zout: <><path d="M10.500 11l5 5" stroke="#d8a820" strokeWidth="3" /><circle cx="7" cy="7" r="5.200" fill="#dceeff" stroke="#3a88d0" strokeWidth="1.600" /><path d="M4 7h6" stroke="#3a78c0" strokeWidth="1.500" /></>,
  tile: <><rect x="1" y="1.500" width="7.500" height="7" fill="#50a020" /><rect x="9.500" y="1.500" width="7.500" height="7" fill="#2858b8" /><rect x="1" y="9.500" width="7.500" height="7" fill="#2858b8" /><rect x="9.500" y="9.500" width="7.500" height="7" fill="#50a020" /><path d="M2.500 4.500h4.500v2.500H2.500zM11 4.500h4.500v2.500H11zM2.500 12.500h4.500V15H2.500zM11 12.500h4.500V15H11z" fill="#fff" /></>,
  play: <>{AXES}<path d="M9 4.500v7l4.500-3.500z" fill="#28b840" stroke="#108020" strokeWidth=".7" /></>,
  shift: <>{AXES}<path d="M9.500 3v10" stroke="#3070b0" strokeWidth="1.500" /><path d="M15.500 8H11M13 5.500v5" stroke="#c04818" strokeWidth="1.400" fill="none" /></>,
  indic: <><path d="M2.500 .5h7l3 3v10h-10z" fill="#fff" stroke="#777" /><path d="M5 10c2 0 1-6 4-6M4.500 7h4" stroke="#666" fill="none" />{plus(6.500, 6.500)}</>,
  clock: <><circle cx="9" cy="9" r="7.200" fill="#e0f0ff" stroke="#1868c0" strokeWidth="2.400" /><path d="M9 4.500V9h4" stroke="#445" strokeWidth="1.300" fill="none" /></>,
  tmpl: <><rect x="1.500" y="2.500" width="15" height="13" fill="#fff" stroke="#3a78b8" /><path d="M1.500 3.500h15" stroke="#4a90d0" strokeWidth="2.500" /><path d="M3 8.500l4-2 3 1.500 4.500-2" stroke="#b04030" fill="none" /><path d="M3 13l3-1 3 1 3-2 3 2" stroke="#309040" fill="none" /></>,
  arrow: <path d="M5 2v12.500l3-2.800 1.800 4.300 2.200-1-1.900-4 4-.2z" fill="#444" />,
  cross: <path d="M9 2v5.500M9 10.500V16M2 9h5.500M10.500 9H16M8.500 9h1" stroke="#555" strokeWidth="1.200" />,
  v: <path d="M9 3v12" stroke="#555" strokeWidth="1.300" />,
  h: <path d="M3 9h12" stroke="#555" strokeWidth="1.300" />,
  diag: <path d="M3 15L15 3.500" stroke="#555" strokeWidth="1.300" />,
  chan: <><path d="M1 13L9 3M4 14L13 2M8 13l6-11M2 8l12-3M1 11l11-3" stroke="#444" strokeWidth="1.200" fill="none" /><path d="M15.500 11.500h-3v5h3M12.500 14h2.500" stroke="#333" fill="none" /></>,
  fibo: <><path d="M2 2.500h13M2 6.500h13M2 10.500h13M2 14.500h8" stroke="#666" strokeDasharray="1.500 1" /><path d="M16 12h-3v5M13 14.500h2.500" stroke="#333" fill="none" /></>,
  a: <path d="M5.500 14L9 4.500h.5L13 14M6.800 11h5" stroke="#555" strokeWidth="1.500" fill="none" />,
  t: <><rect x="3" y="3" width="12" height="13" fill="none" stroke="#666" strokeDasharray="1 1.300" /><path d="M5.500 6.500h7M9 6.500v7M7.500 13.500h3" stroke="#444" strokeWidth="1.500" fill="none" /></>,
  shapes: <><path d="M5 3l3 3-3 3-3-3z" fill="#444" /><path d="M12.500 9l3 3-3 3-3-3z" fill="#555" /><path d="M8 6l4 1.500M5 10l4 3" stroke="#666" strokeWidth="1.500" /></>,
};
const Ic = ({ n }) => <svg className="h-[18px] w-[18px] shrink-0" viewBox="0 0 18 18">{ICON[n]}</svg>;
const Cell = ({ w, children }) => <div className={`flex h-full shrink-0 items-center justify-center ${w}`}>{children}</div>;
const Pressed = ({ w, children }) => (
  <div className={`flex h-[23px] shrink-0 items-center justify-center border border-t-[#a0a0a0] border-l-[#a0a0a0] border-r-white border-b-white bg-[#f8f8f8] ${w}`}>{children}</div>
);
const Drop = ({ w }) => <Cell w={w}><svg className="h-1 w-[5px] shrink-0" viewBox="0 0 5 4"><path d="M0 0h5L2.500 3z" /></svg></Cell>;
const Sep = ({ w }) => <Cell w={w}><div className="h-5 w-px bg-[#a5a5a5]" /></Cell>;
const Grip = ({ w }) => (
  <Cell w={w}><div className="h-[19px] w-[3px] bg-[repeating-linear-gradient(to_bottom,#a8a8a8_0_1px,#f0f0f0_1px_2px)]" /></Cell>
);

const MENU = [
  ["Файл", "w-[45px]"], ["Вид", "w-[36px]"], ["Вставка", "w-[57px]"], ["Графики", "w-[63px]"],
  ["Сервис", "w-[56px]"], ["Окно", "w-[45px]"], ["Справка", "w-[60px]"],
];
const FRAMES = ["M5", "M15", "M30", "H1", "H4", "D1", "W1", "MN"];

function TitleBar() {
  return (
    <div className="flex h-[22px] items-center bg-white text-[#999]">
      <svg className="ml-[2px] h-4 w-4" viewBox="0 0 16 16">
        <rect width="16" height="16" />
        <path d="M0 5q3-3 6-1t5-2 5 0M0 8q3-3 6-1t5-2 5 0" stroke="#e02818" strokeWidth="1.500" fill="none" />
        <path d="M0 11q3-3 6-1t5-2 5 0" stroke="#d0b018" strokeWidth="1.500" fill="none" />
        <path d="M0 14q3-3 6-1t5-2 5 0" stroke="#20a028" strokeWidth="1.500" fill="none" />
      </svg>
      <span className="ml-[4px] whitespace-nowrap text-[11.300px] leading-none tracking-[-0.180px]">29550905: Alpari-Pro.ECN-Demo - Демо Счет - [EURUSD,M1]</span>
      <svg className="ml-auto mr-[18px] h-[14px] w-[100px]" viewBox="0 0 100 14" fill="none" stroke="#999">
        <path d="M2 6.500h9M88.500 1.500l9 9M97.500 1.500l-9 9" />
        <path d="M45.500 4.500h7v7h-7zM47.500 4.500v-2h7v7h-2" />
      </svg>
    </div>
  );
}

function MenuBar() {
  return (
    <div className="flex h-[20px] items-center border-b border-[#a0a0a0] text-[11px] text-[#999]">
      <svg className="ml-[4px] mb-[1px] h-[15px] w-[15px]" viewBox="0 0 15 15">
        <rect x="1.500" y=".5" width="10" height="8" fill="#e8f2ff" stroke="#6a9fe0" />
        <rect x="3.500" y="5.500" width="10" height="8" fill="#f4f9ff" stroke="#4a88d8" />
        <path d="M3.500 6.500h10M1.500 1.500h10" stroke="#6a9fe0" strokeWidth="1.500" />
        <path d="M5 11l2-2 2 2 3-2" stroke="#4a88d8" fill="none" />
      </svg>
      <div className="ml-[8px] flex pb-[1px]">
        {MENU.map(([t, w]) => <span key={t} className={`${w} whitespace-nowrap leading-none`}>{t}</span>)}
      </div>
      <svg className="ml-auto mr-[2px] h-[17px] w-[53px]" viewBox="0 0 53 17">
        <path d="M0 0h16v17H0zM18.500 0h16v17h-16zM37 0h16v17H37z" fill="#e3e3e3" />
        <g stroke="#7f93a8" fill="none">
          <path d="M5 11h5" strokeWidth="2" />
          <path d="M23.500 8.500h5v3h-5zM25.500 8V5.500h5v4h-2" /><path d="M23.500 8.500h5M25.500 5.500h5" strokeWidth="1.600" />
          <path d="M42.500 6l5 5M47.500 6l-5 5" strokeWidth="1.900" />
        </g>
      </svg>
    </div>
  );
}

function Toolbars() {
  return (
    <div className="flex h-[51px] flex-col bg-[#f0f0f0] pt-px">
      <div className="flex h-[25px] items-center">
        <div className="flex h-full w-[807px] shrink-0 items-center border-b border-r border-[#a0a0a0]">
          <Grip w="w-[7px]" /><Cell w="w-[24px]"><Ic n="newChart" /></Cell><Drop w="w-[7px]" />
          <Cell w="w-[29px]"><Ic n="profiles" /></Cell><Drop w="w-[6px]" /><Sep w="w-[13px]" />
          <Cell w="w-[20px]"><Ic n="market" /></Cell><Cell w="w-[34px]"><Ic n="target" /></Cell>
          <Cell w="w-[19px]"><Ic n="nav" /></Cell><Cell w="w-[35px]"><Ic n="terminal" /></Cell>
          <Cell w="w-[19px]"><Ic n="tester" /></Cell><Sep w="w-[13px]" />
          <Cell w="w-[19px]"><Ic n="order" /></Cell>
          <span className="w-[80px] whitespace-nowrap pl-[2px] pb-[2px] text-[11px] leading-none tracking-[-0.100px] text-black">Новый ордер</span>
          <Cell w="w-[23px]"><Ic n="gold" /></Cell><Cell w="w-[4px]" />
          <Pressed w="w-[106px]"><Ic n="auto" /><span className="ml-[2px] whitespace-nowrap pb-[2px] text-[11px] leading-none text-black">Авто-торговля</span></Pressed>
          <Sep w="w-[3px]" /><Grip w="w-[7px]" />
          <Pressed w="w-[25px]"><Ic n="barsUp" /></Pressed><Cell w="w-[29px]"><Ic n="candle" /></Cell>
          <Cell w="w-[24px]"><Ic n="line" /></Cell><Sep w="w-[8px]" />
          <Cell w="w-[24px]"><Ic n="zin" /></Cell><Cell w="w-[29px]"><Ic n="zout" /></Cell>
          <Cell w="w-[25px]"><Ic n="tile" /></Cell><Sep w="w-[8px]" />
          <Pressed w="w-[25px]"><Ic n="play" /></Pressed><Cell w="w-[2px]" /><Pressed w="w-[25px]"><Ic n="shift" /></Pressed>
          <Sep w="w-[7px]" /><Cell w="w-[24px]"><Ic n="indic" /></Cell><Drop w="w-[5px]" /><Cell w="w-[6px]" />
          <Cell w="w-[24px]"><Ic n="clock" /></Cell><Drop w="w-[6px]" /><Cell w="w-[6px]" />
          <Cell w="w-[24px]"><Ic n="tmpl" /></Cell><Drop w="w-[5px]" />
        </div>
        <svg className="ml-auto mr-[5px] h-[18px] w-[48px]" viewBox="0 0 48 18">
          <circle cx="9.500" cy="6" r="3.800" fill="#eaf2ff" stroke="#3a6ad8" strokeWidth="1.600" />
          <path d="M6.500 9l-4.500 5" stroke="#3a6ad8" strokeWidth="2.600" />
          <g fill="#eee" stroke="#888"><path d="M35 6q0-4.500 6-4.500T47 6q0 3-3 4v3l-3-3q-6 0-6-4z" /><path d="M27.500 9.500q0-3.500 5-3.500t5 3.500-5 3.500l-2.500 2.500V13q-2.500-1-2.500-3.500z" /></g>
        </svg>
      </div>
      <div className="flex h-[25px] items-center">
        <div className="flex h-full w-[539px] shrink-0 items-center border-r border-[#a0a0a0] pt-[2px] font-['DejaVu_Sans_Condensed','DejaVu_Sans',sans-serif] text-[9.500px] text-[#444]">
          <Grip w="w-[7px]" /><Pressed w="w-[25px]"><Ic n="arrow" /></Pressed><Cell w="w-[28px]"><Ic n="cross" /></Cell>
          <Sep w="w-[5px]" /><Cell w="w-[28px]"><Ic n="v" /></Cell><Cell w="w-[26px]"><Ic n="h" /></Cell>
          <Cell w="w-[27px]"><Ic n="diag" /></Cell><Cell w="w-[27px]"><Ic n="chan" /></Cell><Cell w="w-[27px]"><Ic n="fibo" /></Cell>
          <Cell w="w-[26px]"><Ic n="a" /></Cell><Cell w="w-[28px]"><Ic n="t" /></Cell><Cell w="w-[24px]"><Ic n="shapes" /></Cell>
          <Drop w="w-[6px]" /><Sep w="w-[9px]" /><Grip w="w-[5px]" />
          <Pressed w="w-[25px]"><span>M1</span></Pressed>
          {FRAMES.map((f) => <Cell key={f} w="w-[26.800px]">{f}</Cell>)}
        </div>
      </div>
    </div>
  );
}

const STATUS = ["w-[111px]", "w-[98px]", "w-[67px]", "w-[68px]", "w-[65px]", "w-[67px]", "w-[63px]"];
function StatusBar() {
  return (
    <div className="flex h-[23px] items-stretch border-t-2 border-white bg-[#f0f0f0] pb-[1px] pt-[3px] text-[11px] text-black">
      <span className="flex w-[642px] items-center pl-[2px] tracking-[-0.150px]">Для вызова справки нажмите F1</span>
      {STATUS.map((w, i) => (
        <span key={i} className={`flex items-center border-l border-[#b4b4b4] pl-[5px] ${w}`}>{i === 0 ? "SCALP INC LITE" : ""}</span>
      ))}
      <span className="flex items-center border-l border-[#b4b4b4] pl-[5px]">
        <svg className="h-[13px] w-[22px]" viewBox="0 0 22 13">
          {[0, 1, 2, 3, 4, 5, 6, 7].map((i) => (
            <g key={i}>
              <path d={`M${i * 2.800 + 1} 0v${9 - i}`} stroke="#7a8a18" strokeWidth="1.900" />
              <path d={`M${i * 2.800 + 1} ${10 - i}V13`} stroke="#184868" strokeWidth="1.900" />
            </g>
          ))}
        </svg>
        <span className="ml-[4px] tracking-[-0.250px]">3481/1 kb</span>
      </span>
    </div>
  );
}

function Task({ line, active, children }) {
  return (
    <div className={`flex h-full w-[46.700px] shrink-0 flex-col items-center justify-between ${active ? "bg-[#454545]" : ""}`}>
      <div className="flex flex-1 items-center">{children}</div>
      <div className={`h-[2px] ${active ? "w-full" : "w-[38px]"} ${line ? "bg-[#76b9ed]" : ""}`} />
    </div>
  );
}

function TaskBar() {
  return (
    <div className="flex h-[38px] items-stretch bg-gradient-to-r from-[#0c0c0c] via-[#181817] to-[#101010] text-white">
      <Task><svg className="h-4 w-4" viewBox="0 0 16 16" fill="#fff"><path d="M0 2.300L6.500 1.400v6.200H0zM7.400 1.300L16 0v7.600H7.400zM0 8.500h6.500v6.200L0 13.800zM7.400 8.500H16V16l-8.600-1.200z" /></svg></Task>
      <Task><svg className="h-4 w-4" viewBox="0 0 16 16" fill="none" stroke="#eee" strokeWidth="1.300"><circle cx="10" cy="6" r="5" /><path d="M6.500 9.500L.5 15.500" /></svg></Task>
      <Task><svg className="mr-[4px] h-4 w-5" viewBox="0 0 20 16" fill="none" stroke="#eee" strokeWidth="1.200"><path d="M4.500 1.500h11v13h-11zM3 3.500H.7v9H3M17 3.500h2.300v9H17" /></svg></Task>
      <Task>
        <svg className="h-[18px] w-[22px]" viewBox="0 0 22 18"><path d="M1 1h6l1.500 1.500H21V17H1z" fill="#e8b84a" /><path d="M1 4h20v13H1z" fill="#fbe08a" /><path d="M4 17v-6.500h13V17h-3v-3.500H7.500V17z" fill="#35a6e6" /></svg>
      </Task>
      <Task line>
        <svg className="h-[22px] w-[22px]" viewBox="0 0 22 22">
          <circle cx="11" cy="11" r="10.500" fill="#fdd23c" />
          <path d="M11 11L1.900 5.800A10.500 10.500 0 0 1 20.100 5.800H11z" fill="#e8402f" />
          <path d="M11 11L1.900 5.800A10.500 10.500 0 0 0 10.300 21.500L15 13z" fill="#30a852" />
          <circle cx="11" cy="11" r="5.200" fill="#fff" /><circle cx="11" cy="11" r="4.100" fill="#4a88f0" />
        </svg>
      </Task>
      <Task line>
        <svg className="h-[20px] w-[22px]" viewBox="0 0 22 20">
          <path d="M11 0l4.500 8.500-3 .5L11 6.500 9 9.500l-3.500-.5z" fill="#7ab82c" />
          <path d="M4.500 10L8 12l-3 4.500h4V19.500H0zM17.500 10L14 12l3 4.500h-4V19.500h9z" fill="#e8e8e8" />
        </svg>
      </Task>
      <Task>
        <svg className="h-[20px] w-[20px]" viewBox="0 0 20 20">
          <path d="M1 1l16-1 2 1v17l-2 2L1 18z" fill="#0a66d8" /><circle cx="9.500" cy="10" r="6.800" fill="#f4faff" />
          <path d="M3.500 10L7 7v2h5V7l3.500 3-3.500 3v-2H7v2z" fill="#0a66d8" />
        </svg>
      </Task>
      <Task line active>
        <svg className="h-[24px] w-[24px]" viewBox="0 0 24 24" fill="none" strokeWidth="1.600" strokeDasharray="1.800 .5">
          <path d="M1 7Q12-5 23 7" stroke="#b03828" /><path d="M1 9.500Q12-2 23 9.500" stroke="#c07828" /><path d="M1 12Q12 .5 23 12" stroke="#a8a028" /><path d="M1 14Q12 3 23 14" stroke="#488838" />
          <text x="0.500" y="21.500" textLength="23" fontSize="8.500" fill="#151515" fontFamily='"DejaVu Sans",sans-serif'>alpari</text>
        </svg>
      </Task>
      <Task line>
        <svg className="h-[22px] w-[22px]" viewBox="0 0 22 22">
          <circle cx="7" cy="7" r="6.500" fill="#00aff0" /><circle cx="15" cy="15" r="6.500" fill="#00aff0" /><circle cx="11" cy="11" r="9.300" fill="#00aff0" />
          <text x="11" y="17" fontSize="17" fontWeight="700" fill="#fff" textAnchor="middle" fontFamily='"Noto Sans",sans-serif'>S</text>
        </svg>
      </Task>
      <div className="ml-auto flex items-center">
        <Cell w="w-[22px]"><svg className="h-2 w-3" viewBox="0 0 12 8" fill="none" stroke="#eee" strokeWidth="1.300"><path d="M1 7l5-5 5 5" /></svg></Cell>
        <Cell w="w-[23px]"><svg className="h-3 w-4" viewBox="0 0 16 12" fill="none" stroke="#ddd"><path d="M5 2.500h9.500v7H5M15.500 5v2.500M8 4l4 4M12 4L8 8" /><path d="M.5 3h4.500v2.500L3.500 7h-1L.5 5.500zM1.500 0v3M4 0v3M3 7v4" strokeWidth="1.300" /></svg></Cell>
        <Cell w="w-[24px]"><svg className="h-[13px] w-4" viewBox="0 0 16 13" fill="none" stroke="#ddd"><path d="M1 4.500h2.500L7 1.500v10l-3.500-3H1zM9 4q1.500 2.500 0 5M11 2.500q2.500 4 0 8M13.300 1q3 5.500 0 11" /></svg></Cell>
        <Cell w="w-[24px]"><svg className="h-[13px] w-[13px]" viewBox="0 0 13 13" fill="none" stroke="#ccc" strokeWidth="1.200"><path d="M1 12Q1 1 12 1M4 12q0-8 8-8M7 12q0-5 5-5" /><circle cx="11" cy="11" r="1.300" fill="#fff" /></svg></Cell>
        <div className="flex h-full w-[30px] items-center justify-center bg-[#2a2a2a]">
          <svg className="h-[16px] w-[16px]" viewBox="0 0 16 16" fill="none" stroke="#eee" strokeWidth="1.200"><path d="M5 13L11 2q1-1.500 2.500-.5t.5 2.500L7.500 14 5 15zM5 6Q1 6 1 9.500T4.500 12M9.500 11q1-3 3-3t3-1" /></svg>
        </div>
        <span className="w-[36px] pl-px pr-[4px] text-center text-[12px] tracking-[-0.300px]">РУС</span>
        <div className="flex w-[62px] flex-col pr-[4px] pb-[1px] text-center text-[11px] leading-[17px] tracking-[-0.400px]"><span>12:40</span><span>05.09.2016</span></div>
        <Cell w="w-[37px]"><svg className="h-4 w-[17px]" viewBox="0 0 17 16" fill="none" stroke="#eee" strokeWidth="1.300"><path d="M8 12.500H6l-2 2v-2H1v-11h14v7" /><path d="M10 15q5 1 6-6-4 1-6 6z" fill="#ddd" stroke="none" /></svg></Cell>
        <div className="mr-[3px] ml-[9px] h-full w-px bg-[#555]" />
      </div>
    </div>
  );
}

export default function App() {
  return (
    <div className="flex h-[734px] w-[1306px] flex-col overflow-hidden bg-[#f0f0f0] font-['Noto_Sans',sans-serif]">
      <TitleBar />
      <MenuBar />
      <Toolbars />
      <div className="relative h-[580px] shrink-0">
        <Chart />
        <ControlPanel />
        <svg className="absolute left-[8px] top-[10px] h-[5px] w-[7px]" viewBox="0 0 7 5"><path d="M0 0h7L3.500 4z" fill="#778899" /></svg>
      </div>
      <StatusBar />
      <TaskBar />
    </div>
  );
}
